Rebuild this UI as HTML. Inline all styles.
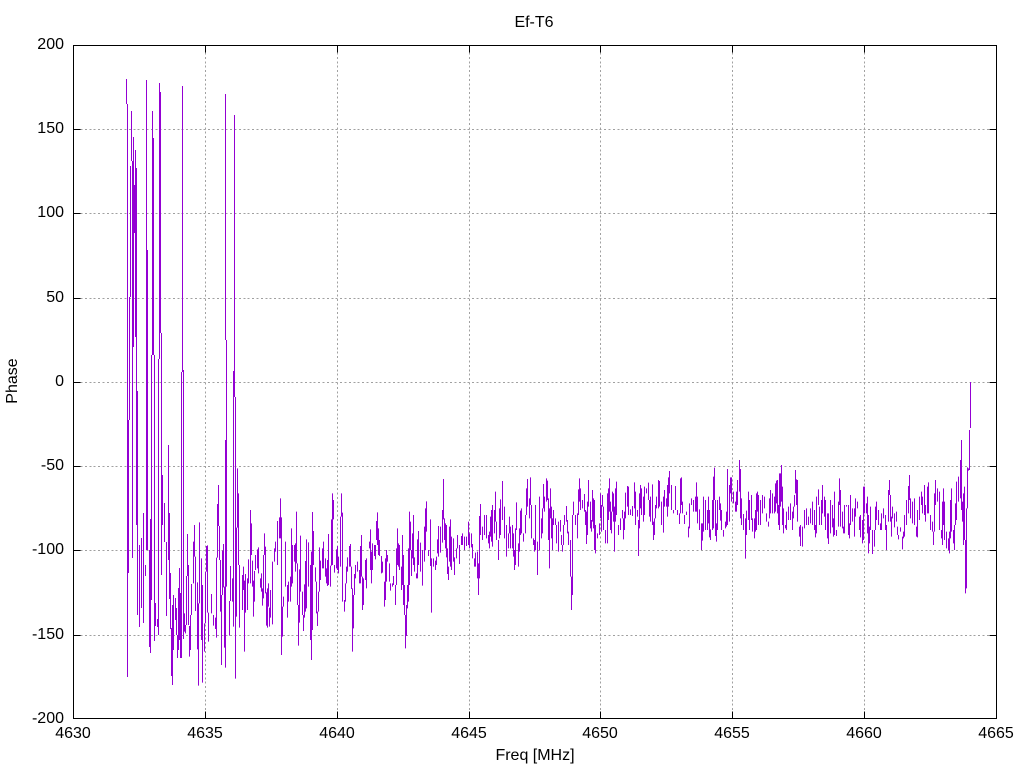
<!DOCTYPE html>
<html><head><meta charset="utf-8"><title>Ef-T6</title>
<style>
html,body{margin:0;padding:0;background:#fff}
svg{display:block}
text{font-family:"Liberation Sans",sans-serif;font-size:16px;fill:#000}
.d{fill:none;stroke:#9400d3;stroke-width:1}
</style></head><body>
<svg width="1024" height="768" viewBox="0 0 1024 768" shape-rendering="crispEdges">
<rect width="1024" height="768" fill="#fff"/>
<g transform="translate(.5,.5)" fill="none" stroke="#a0a0a0" stroke-dasharray="2,2.4">
<path d="M80 129H989M80 213H989M80 298H989M80 382H989M80 466H989M80 550H989M80 635H989"/>
<path d="M205 52V711M337 52V711M469 52V711M600 52V711M732 52V711M864 52V711"/>
</g>
<g transform="translate(.5,0)">
<path class="d" d="M126 79V104M127 104V677M128 420V573M129 297V420M130 166V297M131 111V161M132 161V558M133 137V347M134 185V233M135 150V337M136 168V525M137 391V615M139 545V627M141 538V608M143 513V623M145 565V576M146 80V550M147 250V550M149 550V647M150 519V653M151 355V600M152 111V355M153 138V355M154 355V641M155 603V626M157 619V627M158 359V635M159 83V359M160 92V333M161 333V575M162 475V525M164 503V542M166 542V616M168 445V560M169 513V599M170 573V629M171 628V676M172 605V685M173 595V650M175 598V620M176 608V635M177 635V658M178 588V650M179 568V640M180 593V658M181 372V658M182 86V372M183 370V639"/>
<g transform="translate(0,440) scale(1,.33333)">
<path class="d" d="M184 520V575M185 555V580M186 408V555M187 282V408M188 375V555M189 558V650M190 525V630M191 432V525M193 305V430M194 255V350M195 350V513M197 427V628M198 490V737M199 247V490M201 355V600M202 435V728M204 550V635M205 395V550M206 318V395M207 316V518M208 518V605M211 462V520M213 525V557M215 533V567M216 353V593M217 192V353M218 135V258M219 258V360M220 360V515M221 465V675M222 332V465M223 312V442M224 440V623M225 0V683M226 0V440M229 483V587M230 378V483M232 415V485M233 0V560M235 0V716M236 263V530M237 85V263M238 160V375M239 375V563M242 405V510M243 380V450M244 422V635M245 402V518M247 415V510M248 358V430M250 210V430M251 250V345M252 362V440M253 422V530M254 393V485M255 345V390M257 328V385M258 322V400M260 415V443M261 400V455M262 445V497M263 345V475M264 280V345M265 320V460M266 457V557M268 430V500M267 445V563M269 503V560M270 450V533M272 365V553M274 325V365M275 305V335M277 243V375M279 232V295M280 175V295M281 232V645M282 500V590M283 470V500M285 305V440M287 435V533M288 425V485M290 410V485M291 265V440M292 315V430M294 315V365M295 310V395M296 215V370M297 370V495M298 495V617M299 388V548"/>
</g>
<path class="d" d="M225 94V340M226 340V440M233 371V440M234 115V397M235 397V440"/>
<g transform="translate(0,470) scale(1,.33333)">
<path class="d" d="M300 197V365M302 365V435M303 435V483M304 343V443M305 273V425M306 208V415M308 217V350M310 285V510M311 245V570M312 126V480M313 183V285M315 292V335M316 335V430M317 425V468M318 365V425M319 232V365M320 272V330M322 235V295M323 215V295M325 265V320M326 295V340M327 270V348M328 192V345M330 287V350M331 148V287M332 70V285M333 90V148M334 285V308M336 238V295M337 228V300M338 260V310M340 140V290M341 70V140M342 128V395M344 390V425M345 340V395M346 290V340M347 262V305M349 228V290M350 222V290M351 290V357M352 355V545M353 375V475M354 312V375M355 285V325M357 275V305M359 300V340M360 228V340M361 195V320M362 320V420M363 325V405M365 270V330M366 265V355M369 215V235M370 178V300M371 245V340M372 220V300M374 225V258M375 225V268M376 153V210M377 127V225M378 175V255M379 210V258M381 258V310M382 275V308M384 335V410M385 265V390M386 240V335M387 255V275M389 280V335M390 340V362M392 340V350M393 318V345M395 345V405M396 235V345M397 175V285M398 220V290M399 225V300M401 290V360M402 195V345M403 255V405M404 345V435M405 435V535M406 405V498M407 345V415M408 235V395M409 125V345M410 155V240M411 240V318M412 190V265M413 135V285M414 262V305M416 310V325M417 208V325M418 183V285M420 218V305M422 240V347M424 170V275M425 115V240M426 94V185M428 240V258M430 148V288M431 265V428M433 265V290M435 272V300M436 260V285M437 208V250M438 168V260M440 170V248M442 120V218M443 27V148M444 145V210M445 160V235M446 165V262M447 235V312M448 290V330M449 170V275M450 148V290M451 200V300M453 205V275M454 262V315M456 235V265M457 195V235M459 225V282M461 198V225M462 190V225M464 200V240M466 200V228M468 155V225M469 190V235M471 190V232M472 222V265M474 265V290M475 248V290M477 245V325M478 280V375M479 138V325M480 102V195M482 170V210M484 135V195M486 135V205M488 195V220M489 185V235M490 140V200M491 120V215M492 105V230M494 120V190M495 65V155M496 155V210M498 210V270M499 115V205M500 88V195M502 33V150M504 110V205M506 165V260M508 190V235M509 140V190M510 170V235M512 165V235M513 190V260M514 240V300M515 175V285M516 97V180M518 220V290M519 175V245M520 122V195M521 115V190M523 190V215M525 135V190M526 55V135M527 27V110M529 85V145M530 22V105M531 105V205M533 205V225M534 210V245M535 105V240M537 215V315M539 80V240M541 145V205M542 115V190M543 42V115M544 80V125M546 25V95M547 32V90M548 85V210M549 115V295M550 55V145M551 110V205M552 145V240M553 120V165M555 145V165M556 165V220M558 155V245M560 150V185M561 195V225M562 225V245M563 165V225M564 135V165M566 108V155M567 150V190M568 185V225M570 210V320M571 320V420M572 135V375M573 95V135M575 135V165M577 130V205M578 58V135M579 25V95M580 55V120M582 90V115M584 72V125M585 120V165M586 125V222M587 95V195M588 30V110M590 95V175M591 150V185M592 60V155M593 85V175M594 90V240M595 165V250M597 190V205M599 160V195"/>
</g>
<g transform="translate(0,450) scale(1,.33333)">
<path class="d" d="M600 130V205M601 165V245M602 135V170M603 170V240M605 240V280M607 130V280M608 115V210M609 85V185M610 155V240M611 185V250M612 125V185M613 130V215M614 170V305M615 115V215M616 95V195M618 225V255M620 205V240M622 180V205M623 205V268M624 185V240M625 128V205M627 108V170M628 110V195M630 178V195M632 168V198M634 97V175M635 125V225M637 180V200M638 210V318M639 130V235M640 105V175M641 115V195M643 140V215M644 110V195M646 115V130M648 98V150M649 150V200M650 140V215M652 103V225M653 215V270M654 205V255M655 165V205M656 140V175M658 90V175M659 93V170M661 155V225M663 140V248M664 120V170M666 145V170M667 105V200M668 82V170M669 63V130M671 105V180M673 180V190M675 108V180M677 180V195M679 190V222M680 85V190M681 82V165M682 155V190M684 195V222M686 185V195M688 230V262M689 160V235M691 145V165M693 150V185M695 140V185M696 97V185M697 140V220M699 178V240M701 220V300M702 220V272M703 140V245M705 150V240M707 180V240M708 140V220M709 180V262M710 238V270M712 150V240M713 80V235M714 53V150M715 150V258M716 220V275M717 150V240M719 140V180M720 160V212M721 180V240M723 240V260M725 215V235M726 185V230M727 57V225M729 105V215M730 82V130M731 82V155M733 125V160M735 155V185M736 125V185M737 90V165M739 30V125M740 57V205M741 145V225M743 192V240M745 205V326M746 182V255M748 125V210M749 150V240M751 135V210M752 205V245M754 205V265M755 180V245M756 130V240M757 125V185M758 135V225M760 150V225M762 135V190M764 140V175M766 190V215M768 215V230M769 145V205M770 120V190M772 130V190M774 140V190M775 100V185M776 92V160M777 90V190M778 165V225M779 70V240M780 70V170M781 45V155M782 110V225M783 175V250M785 225V235M786 185V240M788 170V210M790 160V210M792 185V240M793 170V205M794 135V170M795 60V130M796 88V165M797 90V215M799 230V260M800 225V288M802 230V290M804 180V235M806 175V225M808 200V225M810 175V220M812 155V225M814 180V240M815 225V262M816 140V250M818 118V165M819 170V225M821 150V225M822 105V190M824 140V200M825 150V240M827 190V265M828 190V282M830 150V250M832 165V232M833 205V260M834 125V255M836 240V258M838 155V230M839 85V165M840 120V230M842 185V235M843 230V250M844 165V250M846 165V170M848 165V255M849 220V265M850 135V225M852 175V215M854 175V260M855 145V200M857 155V175M859 200V240M860 195V262M862 210V280M863 110V270M864 110V190M866 160V190M867 140V250M868 195V310M869 230V280M870 170V240M872 240V312M874 240V290M875 170V240M876 155V210M878 180V225M880 220V240M881 190V240M883 175V205M885 195V240M886 225V300M888 120V215M889 90V135M890 135V215M891 200V260M892 170V205M894 190V232M896 185V215M897 230V255M898 255V268M900 232V245M902 260V298M903 245V265M904 195V260M906 150V225M908 108V190M909 75V150M910 145V205M912 155V220M914 145V225M916 230V260M917 180V262M919 140V210M921 125V165M922 140V190M924 105V195M925 165V215M927 110V190M928 97V190M930 195V240M932 215V245M933 245V285M934 130V245M935 90V165M937 115V155M939 125V240M941 240V265M942 155V285M943 115V225M944 155V270M946 245V295M948 265V300M949 245V310M950 150V265M951 115V245M953 240V280M954 225V300M955 160V225M956 95V210M958 80V155M960 30V145M961 -30V180M962 155V215M963 130V285M964 110V270M965 270V430M966 175V415M967 52V175M968 55V62M969 -60V60M970 -204V-66"/>
</g>
</g>
<g fill="none" stroke="#000" transform="translate(.5,.5)">
<rect x="73" y="45" width="923" height="673"/>
<path d="M73 129H80M73 213H80M73 298H80M73 382H80M73 466H80M73 550H80M73 635H80M996 129H989M996 213H989M996 298H989M996 382H989M996 466H989M996 550H989M996 635H989"/>
<path d="M205 718V711M337 718V711M469 718V711M600 718V711M732 718V711M864 718V711M205 45V52M337 45V52M469 45V52M600 45V52M732 45V52M864 45V52"/>
</g>
<g shape-rendering="auto">
<g text-anchor="end">
<text x="64" y="49">200</text>
<text x="64" y="133">150</text>
<text x="64" y="217">100</text>
<text x="64" y="302">50</text>
<text x="64" y="386">0</text>
<text x="64" y="470">-50</text>
<text x="64" y="554">-100</text>
<text x="64" y="639">-150</text>
<text x="64" y="723">-200</text>
</g>
<g text-anchor="middle">
<text x="73" y="738">4630</text>
<text x="205" y="738">4635</text>
<text x="337" y="738">4640</text>
<text x="469" y="738">4645</text>
<text x="600" y="738">4650</text>
<text x="732" y="738">4655</text>
<text x="864" y="738">4660</text>
<text x="996" y="738">4665</text>
<text x="534" y="27">Ef-T6</text>
<text x="535" y="760">Freq [MHz]</text>
<text transform="translate(17,381) rotate(-90)">Phase</text>
</g>
</g>
</svg>
</body></html>
